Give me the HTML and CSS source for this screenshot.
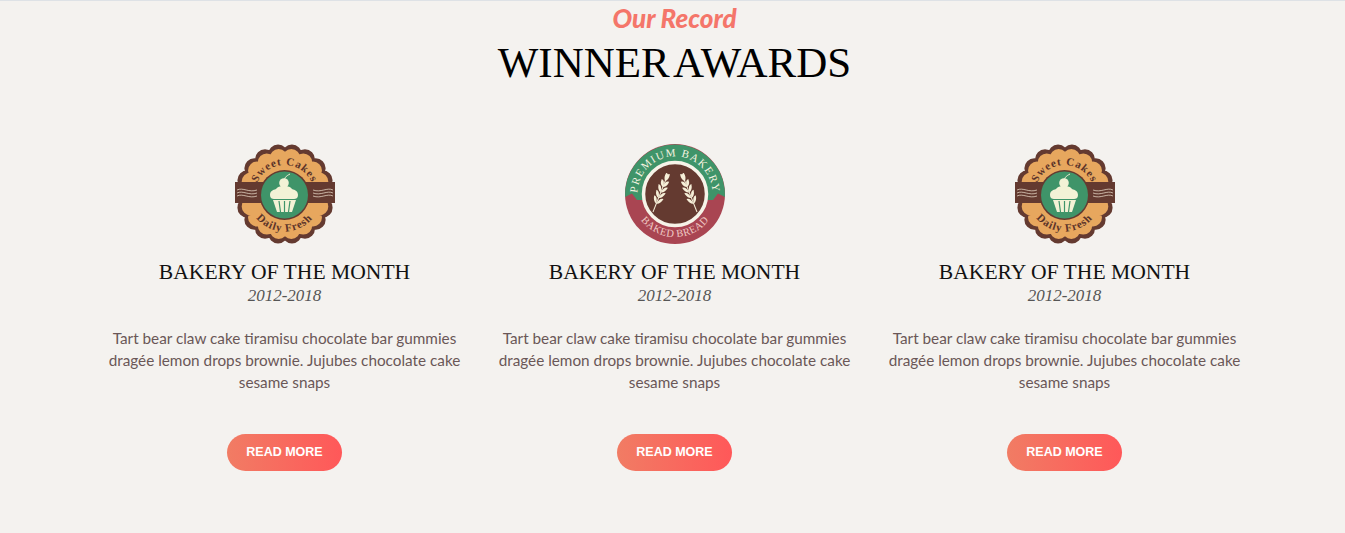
FILE: index.html
```html
<!DOCTYPE html>
<html lang="en">
<head>
<meta charset="utf-8">
<title>Winner Awards</title>
<link rel="stylesheet" href="styles.css">
</head>
<body>
<section class="awards">
  <header class="awards-head">
    <p class="eyebrow">Our Record</p>
    <h2 class="title">WINNER AWARDS</h2>
  </header>
  <div class="award-grid">
    <article class="award">
      <svg class="badge" viewBox="0 0 100 100" aria-hidden="true">
        <defs>
          <path id="a1" d="M19.500 51a30 30 0 0 1 60 0"/>
          <path id="b1" d="M13 51a36.500 36.500 0 0 0 73 0"/>
        </defs>
        <circle class="scallop-dark" cx="50" cy="50" r="40" pathLength="18"/>
        <circle class="scallop-tan" cx="50" cy="50" r="36.500" pathLength="18"/>
        <text class="arc-text"><textPath href="#a1" startOffset="50%">Sweet Cakes</textPath></text>
        <text class="arc-text"><textPath href="#b1" startOffset="50%">Daily Fresh</textPath></text>
        <rect class="band" x="0" y="38" width="100" height="21"/>
        <path class="waves" d="M2 46c6-3 12 3 20 0M2 49c6-3 12 3 20 0M2 52c6-3 12 3 20 0M78 46c8 3 14-3 20 0M78 49c8 3 14-3 20 0M78 52c8 3 14-3 20 0"/>
        <circle class="ring" cx="49.500" cy="51" r="25"/>
        <circle class="green" cx="49.500" cy="51" r="23.500"/>
        <path class="cherry-stem" d="M49 38c0-4 2-6 6-8"/>
        <circle class="cherry" cx="49" cy="39" r="4.800"/>
        <path class="frosting" d="M35 51c0-4 3-5 6-6 1-2 4-3 8-3s7 1 8 3c3 1 6 2 6 6 0 3-2 4-4 4H39c-2 0-4-1-4-4z"/>
        <path class="cup" d="M38 56h23l-4 12H42z"/>
        <path class="cup-lines" d="M44 57l1.500 11M49.500 57v11M55 57l-1.500 11"/>
      </svg>
      <h3 class="award-name">BAKERY OF THE MONTH</h3>
      <p class="award-years">2012-2018</p>
      <p class="award-text">Tart bear claw cake tiramisu chocolate bar gummies dragée lemon drops brownie. Jujubes chocolate cake sesame snaps</p>
      <a class="btn" href="#">READ MORE</a>
    </article>
    <article class="award">
      <svg class="badge" viewBox="0 0 100 100" aria-hidden="true">
        <defs>
          <path id="a2" d="M13 56a37.500 37.500 0 1 1 74 0"/>
          <path id="b2" d="M7 50a43 43 0 0 0 86 0"/>
          <g id="ear">
            <path class="wheat-stem" d="M0 0V-41"/>
            <path class="wheat-grains" d="M0-9q-4-1-5-7q4 0 5 7zM0-9q4-1 5-7q-4 0-5 7zM0-15q-4-1-5-7q4 0 5 7zM0-15q4-1 5-7q-4 0-5 7zM0-21q-4-1-5-7q4 0 5 7zM0-21q4-1 5-7q-4 0-5 7zM0-27q-4-1-4-7q4 0 4 7zM0-27q4-1 4-7q-4 0-4 7zM0-33q-3-3-2-8q1-1 2 1q1-2 2-1q1 5-2 8z"/>
          </g>
        </defs>
        <circle class="seal-red" cx="50" cy="50" r="50"/>
        <path class="seal-green" d="M.3 45A50 50 0 0 1 99.700 45L100 53 93 49.500 88 56H12L7 49.500 0 53z"/>
        <text class="arc-top"><textPath href="#a2" startOffset="50%">PREMIUM BAKERY</textPath></text>
        <text class="arc-bottom"><textPath href="#b2" startOffset="50%">BAKED BREAD</textPath></text>
        <circle class="seal-core" cx="50" cy="50" r="31.500"/>
        <use href="#ear" transform="translate(28 68) rotate(21.500)"/>
        <use href="#ear" transform="translate(72 68) rotate(-21.500)"/>
      </svg>
      <h3 class="award-name">BAKERY OF THE MONTH</h3>
      <p class="award-years">2012-2018</p>
      <p class="award-text">Tart bear claw cake tiramisu chocolate bar gummies dragée lemon drops brownie. Jujubes chocolate cake sesame snaps</p>
      <a class="btn" href="#">READ MORE</a>
    </article>
    <article class="award">
      <svg class="badge" viewBox="0 0 100 100" aria-hidden="true">
        <defs>
          <path id="a3" d="M19.500 51a30 30 0 0 1 60 0"/>
          <path id="b3" d="M13 51a36.500 36.500 0 0 0 73 0"/>
        </defs>
        <circle class="scallop-dark" cx="50" cy="50" r="40" pathLength="18"/>
        <circle class="scallop-tan" cx="50" cy="50" r="36.500" pathLength="18"/>
        <text class="arc-text"><textPath href="#a3" startOffset="50%">Sweet Cakes</textPath></text>
        <text class="arc-text"><textPath href="#b3" startOffset="50%">Daily Fresh</textPath></text>
        <rect class="band" x="0" y="38" width="100" height="21"/>
        <path class="waves" d="M2 46c6-3 12 3 20 0M2 49c6-3 12 3 20 0M2 52c6-3 12 3 20 0M78 46c8 3 14-3 20 0M78 49c8 3 14-3 20 0M78 52c8 3 14-3 20 0"/>
        <circle class="ring" cx="49.500" cy="51" r="25"/>
        <circle class="green" cx="49.500" cy="51" r="23.500"/>
        <path class="cherry-stem" d="M49 38c0-4 2-6 6-8"/>
        <circle class="cherry" cx="49" cy="39" r="4.800"/>
        <path class="frosting" d="M35 51c0-4 3-5 6-6 1-2 4-3 8-3s7 1 8 3c3 1 6 2 6 6 0 3-2 4-4 4H39c-2 0-4-1-4-4z"/>
        <path class="cup" d="M38 56h23l-4 12H42z"/>
        <path class="cup-lines" d="M44 57l1.500 11M49.500 57v11M55 57l-1.500 11"/>
      </svg>
      <h3 class="award-name">BAKERY OF THE MONTH</h3>
      <p class="award-years">2012-2018</p>
      <p class="award-text">Tart bear claw cake tiramisu chocolate bar gummies dragée lemon drops brownie. Jujubes chocolate cake sesame snaps</p>
      <a class="btn" href="#">READ MORE</a>
    </article>
  </div>
</section>
</body>
</html>
```
FILE: styles.css
```css
* { box-sizing: border-box; }
html, body { margin: 0; padding: 0; }
body { background: #f4f2ef; overflow: hidden; }

.awards {
  height: 533px;
  border-top: 1px solid #dee2e6;
  padding-left: 4px;
  display: flex;
  flex-direction: column;
  align-items: center;
}
.awards-head { text-align: center; }
.eyebrow {
  margin: 0;
  font: italic 900 26px/34px Lato, sans-serif;
  color: #f4766a;
}
.title {
  margin: 0;
  font: 400 43px/56px "Liberation Serif", serif;
  color: #000;
  word-spacing: -5px;
}
.award-grid {
  margin-top: 53px;
  display: grid;
  grid-template-columns: repeat(3, 390px);
}
.award {
  display: flex;
  flex-direction: column;
  align-items: center;
  padding: 0 15px;
  text-align: center;
}
.badge { width: 100px; height: 100px; display: block; overflow: visible; }
.award-name {
  margin: 16px 0 0;
  font: 400 21.600px/24px "Liberation Serif", serif;
  color: #111;
}
.award-years {
  margin: 0;
  font: italic 400 17px/24px "Liberation Serif", serif;
  color: #555;
}
.award-text {
  margin: 19px 0 0;
  font: 400 15.300px/22px Lato, sans-serif;
  color: #6a5757;
}
.btn {
  margin-top: 41px;
  width: 115px;
  height: 37px;
  border-radius: 19px;
  background: linear-gradient(90deg, #f17c64, #ff5859);
  color: #fff;
  font: 700 12.500px/36px "Liberation Sans", sans-serif;
  text-decoration: none;
  text-align: center;
}

.scallop-dark { fill: #643a30; stroke: #643a30; stroke-width: 20; stroke-dasharray: 0 1; stroke-linecap: round; }
.scallop-tan { fill: #e7a75e; stroke: #e7a75e; stroke-width: 18; stroke-dasharray: 0 1; stroke-linecap: round; }
.arc-text { font: 700 11px "Liberation Serif", serif; fill: #5a3329; text-anchor: middle; letter-spacing: .9px; }
.band, .ring { fill: #643a30; }
.waves { fill: none; stroke: #f4e7d4; stroke-width: .7; }
.green { fill: #3f9469; }
.cherry-stem { fill: none; stroke: #f6efd8; stroke-width: 1; }
.cherry, .frosting, .cup { fill: #f3f2d6; }
.cup-lines { fill: none; stroke: #3f9469; stroke-width: 1.200; }

.seal-red { fill: #a94552; }
.seal-green { fill: #3f9469; }
.seal-core { fill: #643a30; stroke: #f6f3e8; stroke-width: 3.500; }
.arc-top { font: 400 11px "Liberation Serif", serif; fill: #f6f3e0; text-anchor: middle; letter-spacing: 1.200px; }
.arc-bottom { font: 400 10.500px "Liberation Serif", serif; fill: #f0c9c4; text-anchor: middle; letter-spacing: .4px; }
.wheat-stem { fill: none; stroke: #f6efd8; stroke-width: 1; }
.wheat-grains { fill: #f6efd8; }
```
